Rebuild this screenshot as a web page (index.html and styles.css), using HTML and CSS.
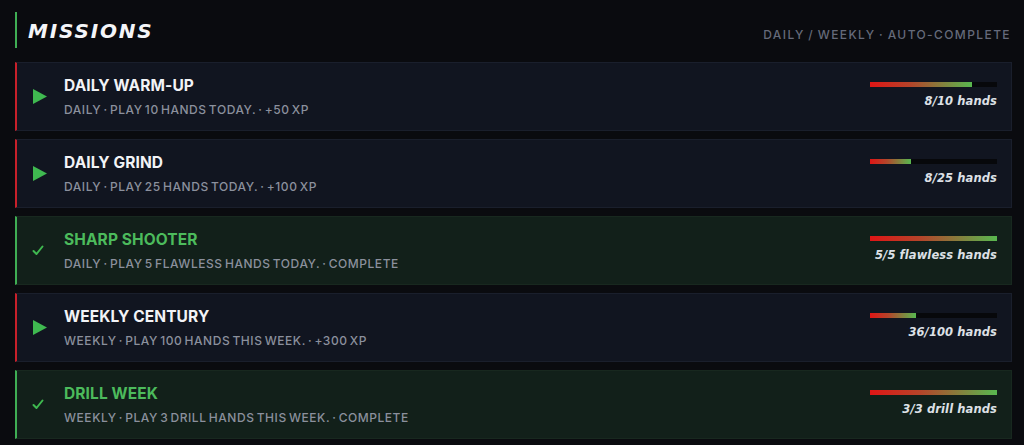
FILE: index.html
```html
<!DOCTYPE html>
<html>
<head>
<meta charset="utf-8">
<link rel="stylesheet" href="styles.css">
</head>
<body>
<div class="page">
  <header class="head">
    <h1 class="title">MISSIONS</h1>
    <div class="meta">DAILY / WEEKLY · AUTO-COMPLETE</div>
  </header>
  <div class="list">
    <div class="card">
      <div class="icon"><svg width="14" height="15" viewBox="0 0 14 15"><polygon points="0,0 14,7.5 0,15" fill="#3fb950"/></svg></div>
      <div class="info">
        <div class="name">DAILY WARM-UP</div>
        <div class="desc">DAILY · PLAY 10 HANDS TODAY. · +50 XP</div>
      </div>
      <div class="prog">
        <div class="track"><div class="fill" style="width:80%"></div></div>
        <div class="count">8/10 hands</div>
      </div>
    </div>
    <div class="card">
      <div class="icon"><svg width="14" height="15" viewBox="0 0 14 15"><polygon points="0,0 14,7.5 0,15" fill="#3fb950"/></svg></div>
      <div class="info">
        <div class="name">DAILY GRIND</div>
        <div class="desc">DAILY · PLAY 25 HANDS TODAY. · +100 XP</div>
      </div>
      <div class="prog">
        <div class="track"><div class="fill" style="width:32%"></div></div>
        <div class="count">8/25 hands</div>
      </div>
    </div>
    <div class="card done">
      <div class="icon"><svg width="12" height="11" viewBox="0 0 12 11"><path d="M1.5 6 L4.5 9 L10.5 1.5" fill="none" stroke="#3fb950" stroke-width="2" stroke-linecap="round" stroke-linejoin="round"/></svg></div>
      <div class="info">
        <div class="name">SHARP SHOOTER</div>
        <div class="desc">DAILY · PLAY 5 FLAWLESS HANDS TODAY. · COMPLETE</div>
      </div>
      <div class="prog">
        <div class="track"><div class="fill" style="width:100%"></div></div>
        <div class="count">5/5 flawless hands</div>
      </div>
    </div>
    <div class="card">
      <div class="icon"><svg width="14" height="15" viewBox="0 0 14 15"><polygon points="0,0 14,7.5 0,15" fill="#3fb950"/></svg></div>
      <div class="info">
        <div class="name">WEEKLY CENTURY</div>
        <div class="desc">WEEKLY · PLAY 100 HANDS THIS WEEK. · +300 XP</div>
      </div>
      <div class="prog">
        <div class="track"><div class="fill" style="width:36%"></div></div>
        <div class="count">36/100 hands</div>
      </div>
    </div>
    <div class="card done">
      <div class="icon"><svg width="12" height="11" viewBox="0 0 12 11"><path d="M1.5 6 L4.5 9 L10.5 1.5" fill="none" stroke="#3fb950" stroke-width="2" stroke-linecap="round" stroke-linejoin="round"/></svg></div>
      <div class="info">
        <div class="name">DRILL WEEK</div>
        <div class="desc">WEEKLY · PLAY 3 DRILL HANDS THIS WEEK. · COMPLETE</div>
      </div>
      <div class="prog">
        <div class="track"><div class="fill" style="width:100%"></div></div>
        <div class="count">3/3 drill hands</div>
      </div>
    </div>
  </div>
</div>
</body>
</html>
```
FILE: styles.css
```css
* { box-sizing: border-box; }
html, body { margin: 0; padding: 0; }
body {
  background: #0a0b0f;
  font-family: Inter, "Liberation Sans", sans-serif;
  color: #e8eaf0;
  width: 1024px;
  height: 445px;
  overflow: hidden;
}
.page { padding: 12px 12px 0 15px; }
.head {
  display: flex;
  align-items: center;
  justify-content: space-between;
  height: 36px;
  margin-bottom: 14px;
}
.title {
  margin: 0;
  height: 36px;
  display: flex;
  align-items: center;
  border-left: 2px solid #3fae54;
  padding-left: 11px;
  padding-top: 2px;
  font-family: "DejaVu Sans", sans-serif;
  font-style: italic;
  font-weight: 700;
  font-size: 20px;
  letter-spacing: 1.8px;
  color: #f4f5f8;
}
.meta {
  font-size: 12px;
  font-weight: 500;
  letter-spacing: 1.4px;
  word-spacing: -1px;
  color: #656a7a;
  padding-top: 9px;
  margin-right: 1px;
}
.list { display: flex; flex-direction: column; gap: 8px; }
.card {
  height: 69px;
  display: flex;
  align-items: center;
  background: #111520;
  border: 1px solid #1a1f2c;
  border-left: 2px solid #c8202a;
  padding: 0 14px 0 0;
}
.card.done {
  background: #12201a;
  border-color: #18281f;
  border-left-color: #3fae54;
}
.icon {
  width: 47px;
  padding-left: 16px;
  display: flex;
  align-items: center;
}
.card.done .icon { padding-left: 15px; }
.info { flex: 1; display: flex; flex-direction: column; gap: 7px; padding-top: 0; }
.name {
  font-size: 15.5px;
  font-weight: 700;
  letter-spacing: 0.1px;
  color: #f2f3f6;
}
.done .name { color: #4cbb5c; }
.desc {
  font-size: 12px;
  font-weight: 500;
  letter-spacing: 0.55px;
  word-spacing: -1.5px;
  color: #8b909d;
}
.prog {
  width: 127px;
  display: flex;
  flex-direction: column;
  align-items: flex-end;
  gap: 6px;
  margin-top: -4px;
}
.track {
  width: 127px;
  height: 5px;
  background: #07080b;
}
.fill {
  height: 100%;
  background: linear-gradient(90deg, #e01515 0%, #b4452a 40%, #58b84f 100%);
}
.count {
  font-family: "DejaVu Sans", sans-serif;
  font-style: italic;
  font-weight: 700;
  font-size: 11.5px;
  letter-spacing: 0.1px;
  color: #dde0e6;
  white-space: nowrap;
  padding-top: 1px;
}
```
